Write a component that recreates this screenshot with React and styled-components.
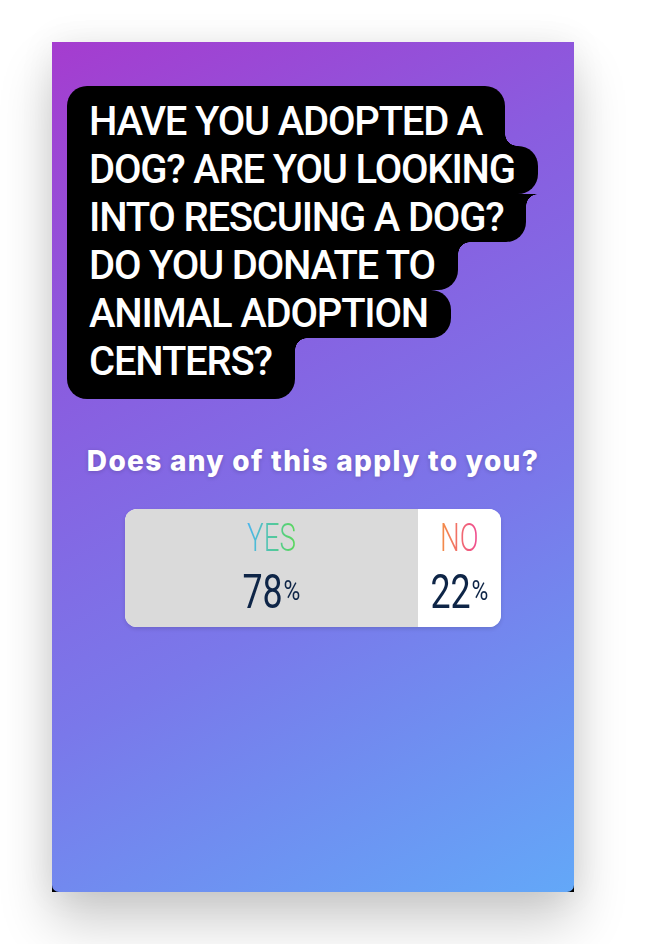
import React from "react";
import styled, { createGlobalStyle, css } from "styled-components";

const Global = createGlobalStyle`
  html, body { margin: 0; padding: 0; background: #ffffff; }
  body { font-family: Roboto, "Noto Sans", sans-serif; }
`;

const Page = styled.div`
  width: 654px;
  height: 944px;
  box-sizing: border-box;
  padding: 42px 80px 0 52px;
  overflow: hidden;
`;

const Card = styled.div`
  width: 522px;
  height: 850px;
  background: #000;
  box-shadow: 0 30px 50px rgba(0, 0, 0, 0.2), 0 0 34px rgba(0, 0, 0, 0.07);
  display: flex;
`;

const Story = styled.div`
  flex: 1;
  border-radius: 0 0 7px 7px;
  background: linear-gradient(152deg, #a53ccf 0%, #8a5cdf 30%, #7a78ea 62%, #63a8f8 100%);
  display: flex;
  flex-direction: column;
  padding-top: 44px;
`;

const Sticker = styled.div`
  display: flex;
  flex-direction: column;
  align-items: flex-start;
  padding-left: 15px;
`;

const R = 20;
const r = 12;

const Line = styled.div`
  position: relative;
  background: #000;
  color: #fff;
  font-family: Roboto, sans-serif;
  font-size: 40px;
  font-weight: 500;
  letter-spacing: -1.2px;
  line-height: 48px;
  white-space: nowrap;
  padding: ${(p) => (p.$first ? 12 : 0)}px 23px ${(p) => (p.$last ? 13 : 0)}px 22px;
  border-radius: ${(p) => (p.$first ? R : 0)}px ${(p) => (p.$tr ? R : 0)}px
    ${(p) => (p.$br ? R : 0)}px ${(p) => (p.$last ? R : 0)}px;

  ${(p) =>
    p.$fillBottom &&
    css`
      &::after {
        content: "";
        position: absolute;
        right: -${r}px;
        bottom: 0;
        width: ${r}px;
        height: ${r}px;
        background: radial-gradient(circle at 100% 0, transparent ${r - 0.5}px, #000 ${r}px);
      }
    `}
  ${(p) =>
    p.$fillTop &&
    css`
      &::before {
        content: "";
        position: absolute;
        right: -${r}px;
        top: 0;
        width: ${r}px;
        height: ${r}px;
        background: radial-gradient(circle at 100% 100%, transparent ${r - 0.5}px, #000 ${r}px);
      }
    `}
`;

const Question = styled.div`
  margin-top: 45px;
  text-align: center;
  color: #fff;
  font-family: Inter, "Noto Sans", sans-serif;
  font-weight: 800;
  font-size: 28px;
  line-height: 34px;
  letter-spacing: 1.3px;
  text-shadow: 0 1px 4px rgba(0, 0, 0, 0.18);
`;

const Poll = styled.div`
  align-self: center;
  margin-top: 31px;
  width: 376px;
  height: 118px;
  border-radius: 12px;
  background: #fff;
  overflow: hidden;
  display: flex;
  box-shadow: 0 2px 4px rgba(0, 0, 0, 0.12);
`;

const Option = styled.div`
  display: flex;
  flex-direction: column;
  align-items: center;
  box-sizing: border-box;
  padding-top: 10px;
  gap: 10px;
  background: ${(p) => (p.$winner ? "#dadada" : "#ffffff")};
  flex: ${(p) => (p.$winner ? "0 0 auto" : "1 1 auto")};
`;

const Label = styled.span`
  display: inline-block;
  font-family: Roboto, sans-serif;
  font-weight: 300;
  font-size: 38px;
  line-height: 38px;
  transform: scaleX(0.73);
  background: ${(p) => p.$grad};
  -webkit-background-clip: text;
  background-clip: text;
  color: transparent;
`;

const Result = styled.div`
  display: flex;
  align-items: center;
  color: #0e2547;
  font-family: Roboto, sans-serif;
`;

const Digits = styled.span`
  display: inline-block;
  font-size: 49px;
  line-height: 49px;
  font-weight: 400;
  transform: scaleX(0.73);
  margin: 0 -8px 0 -7px;
`;

const Percent = styled.span`
  font-size: 27px;
  line-height: 27px;
  font-weight: 400;
  transform: scaleX(0.85);
`;

const lines = [
  { t: "HAVE YOU ADOPTED A", tr: true, br: false, fillBottom: true },
  { t: "DOG? ARE YOU LOOKING", tr: true, br: true },
  { t: "INTO RESCUING A DOG?", tr: false, br: true, fillTop: true },
  { t: "DO YOU DONATE TO", tr: false, br: true, fillTop: true },
  { t: "ANIMAL ADOPTION", tr: true, br: true },
  { t: "CENTERS?", tr: false, br: true, fillTop: true },
];

const options = [
  { label: "YES", pct: 78, grad: "linear-gradient(90deg, #4bb5ef, #5ad85a)" },
  { label: "NO", pct: 22, grad: "linear-gradient(90deg, #f38f44, #ef4a94)" },
];

export default function App() {
  const winner = Math.max(...options.map((o) => o.pct));
  return (
    <>
      <Global />
      <Page>
        <Card>
          <Story>
            <Sticker>
              {lines.map((l, i) => (
                <Line
                  key={i}
                  $first={i === 0}
                  $last={i === lines.length - 1}
                  $tr={l.tr}
                  $br={l.br}
                  $fillBottom={l.fillBottom}
                  $fillTop={l.fillTop}
                >
                  {l.t}
                </Line>
              ))}
            </Sticker>
            <Question>Does any of this apply to you?</Question>
            <Poll>
              {options.map((o) => (
                <Option
                  key={o.label}
                  $winner={o.pct === winner}
                  style={o.pct === winner ? { width: `${o.pct}%` } : undefined}
                >
                  <Label $grad={o.grad}>{o.label}</Label>
                  <Result>
                    <Digits>{o.pct}</Digits>
                    <Percent>%</Percent>
                  </Result>
                </Option>
              ))}
            </Poll>
          </Story>
        </Card>
      </Page>
    </>
  );
}
